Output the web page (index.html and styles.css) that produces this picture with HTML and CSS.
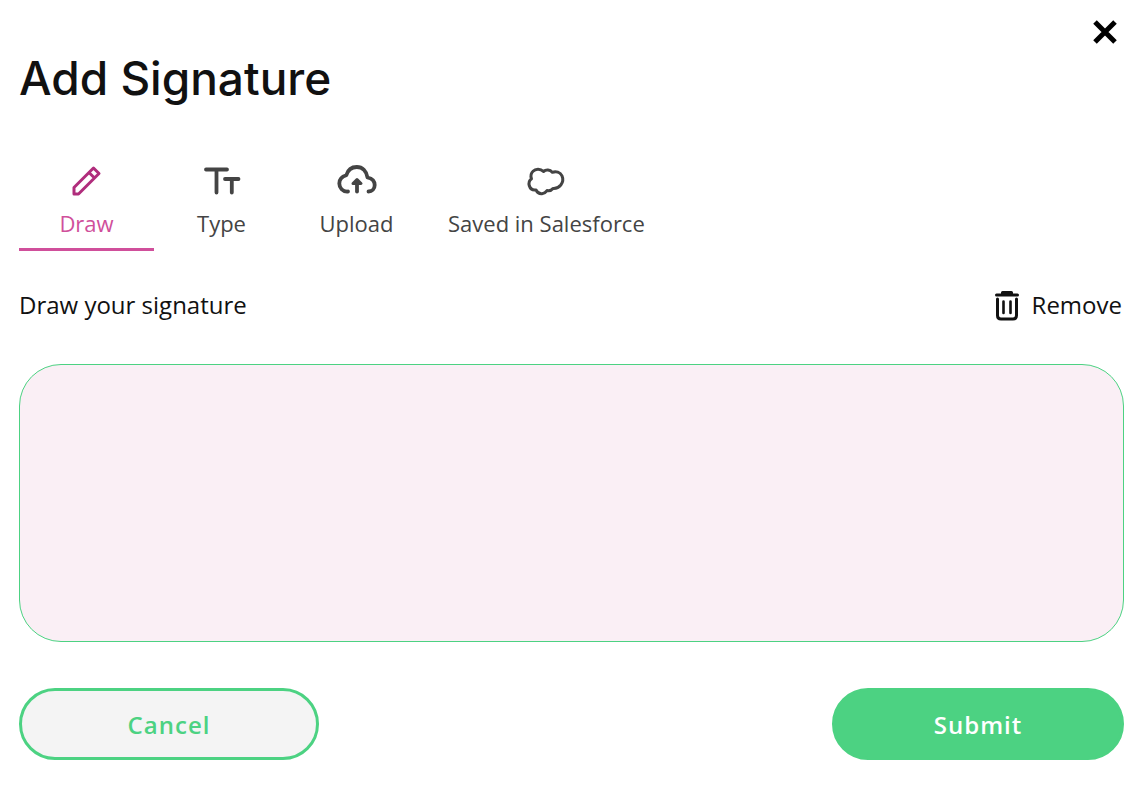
FILE: index.html
```html
<!DOCTYPE html>
<html lang="en">
<head>
    <meta charset="UTF-8">
    <meta name="viewport" content="width=device-width, initial-scale=1.0">
    <title>Add Signature</title>
    <link rel="stylesheet" href="styles.css">
</head>
<body>
    <main class="modal">
        <header class="modal-header">
            <button type="button" class="close-btn" aria-label="Close">
                <svg width="24" height="24" viewBox="0 0 24 24" fill="none" stroke="currentColor" stroke-width="5">
                    <path d="M2 2L22 22M22 2L2 22"/>
                </svg>
            </button>
            <h1>Add Signature</h1>
        </header>

        <div class="tabs" role="tablist">
            <button type="button" class="tab active" role="tab" aria-selected="true">
                <svg width="40" height="32" viewBox="0 0 40 32" fill="none" stroke="currentColor" stroke-width="3" stroke-linejoin="round">
                    <path d="M7 29V22.500L26.500 3L32 8.500L12.500 28L11.500 29ZM22 7.500L27.500 13"/>
                </svg>
                <span>Draw</span>
            </button>
            <button type="button" class="tab" role="tab" aria-selected="false">
                <svg width="40" height="32" viewBox="0 0 40 32" fill="none" stroke="currentColor" stroke-width="3.800" stroke-linecap="round" stroke-linejoin="round">
                    <path d="M4 4.500H25M14.500 4.500V27.500M23 14H36.500M29.800 14V27.500"/>
                </svg>
                <span>Type</span>
            </button>
            <button type="button" class="tab" role="tab" aria-selected="false">
                <svg width="40" height="32" viewBox="0 0 40 32" fill="none" stroke="currentColor" stroke-width="3.800" stroke-linecap="round" stroke-linejoin="round">
                    <path d="M11 26.500C5.500 27 2.300 22.500 2.300 18.500C2.300 14 5.200 11.500 9.300 10.300C10.800 5 14.500 2 19.800 2C25.500 2 29.500 6 30.500 12.500C35 13.500 37.700 16 37.700 20C37.700 24 35 26.500 31.500 26.500"/>
                    <path d="M20 26.500V16.500"/>
                    <path d="M16 18.500L20 14.500L24 18.500Z" fill="currentColor" stroke-width="3"/>
                </svg>
                <span>Upload</span>
            </button>
            <button type="button" class="tab" role="tab" aria-selected="false">
                <svg width="40" height="32" viewBox="0 0 40 32" fill="none" stroke="currentColor" stroke-width="3" stroke-linejoin="round">
                    <path d="M17.500 6.500C14.500 3.500 9.500 3.500 7 6.300C4.800 8.500 4.600 11.500 5.500 13.700C3 15.500 2.700 18.500 3.300 20.800C4.200 23.800 7 25.300 10 24.900C11.300 28 13.600 28.900 16 28.700C18.500 28.500 20 27 21 25.600C23.500 26 25.500 25.400 27 23.500C30.500 23.800 33 22.300 34.800 20C36.800 17.300 37.200 13.500 36 10.800C34.200 7.200 30 6 26.300 7.300C24 4.700 20 4.300 17.500 6.500Z"/>
                </svg>
                <span>Saved in Salesforce</span>
            </button>
        </div>

        <div class="toolbar">
            <span id="padLabel">Draw your signature</span>
            <button type="button" class="remove-btn">
                <svg width="26" height="32" viewBox="0 0 26 32" fill="none" stroke="currentColor" stroke-width="3" stroke-linecap="round" stroke-linejoin="round">
                    <path d="M2.500 6H23.500M8.500 3.500H17.500V5H8.500Z"/>
                    <path d="M3.500 10V26.500Q3.500 30 7 30H19Q22.500 30 22.500 26.500V10"/>
                    <path d="M9.500 12.500V24M16.500 12.500V24" stroke-width="2.600"/>
                </svg>
                <span>Remove</span>
            </button>
        </div>

        <canvas class="signature-pad" aria-labelledby="padLabel"></canvas>

        <footer class="actions">
            <button type="button" class="btn btn-cancel">Cancel</button>
            <button type="submit" class="btn btn-submit">Submit</button>
        </footer>
    </main>
</body>
</html>
```
FILE: styles.css
```css
:root {
    --green: #4cd282;
    --pink: #d04f9b;
    --pink-dark: #b02d7c;
    --pad-bg: #faeff5;
    --text: #111;
    --text-muted: #444;
}

* {
    box-sizing: border-box;
}

body {
    margin: 0;
    background: white;
    color: var(--text);
    font-family: "Open Sans", sans-serif;
    font-size: 24px;
}

button {
    padding: 0;
    border: none;
    background: none;
    color: inherit;
    font: inherit;
    cursor: pointer;
}

.modal {
    padding: 20px 19px;
}

.modal-header {
    display: flex;
    flex-direction: column;
}

.close-btn {
    display: flex;
    align-self: flex-end;
    margin-right: 7px;
    color: black;
}

h1 {
    margin: 4px 0 48px;
    font-family: Inter, sans-serif;
    font-size: 46px;
    font-weight: 500;
    line-height: 60px;
}

.tabs {
    display: flex;
}

.tab {
    display: flex;
    flex-direction: column;
    align-items: center;
    gap: 10px;
    min-width: 135px;
    padding: 9px 24px;
    border-bottom: 3px solid transparent;
    color: var(--text-muted);
    font-size: 22px;
    line-height: 32px;
}

.tab.active {
    border-bottom-color: var(--pink);
    color: var(--pink);
}

.tab.active svg {
    color: var(--pink-dark);
}

.toolbar {
    display: flex;
    align-items: center;
    justify-content: space-between;
    margin: 36px 0 41px;
    line-height: 36px;
}

.remove-btn {
    display: flex;
    align-items: center;
    gap: 12px;
    margin-right: 2px;
}

.signature-pad {
    display: block;
    width: 100%;
    height: 278px;
    border: 1px solid var(--green);
    border-radius: 42px;
    background: var(--pad-bg);
}

.actions {
    display: flex;
    justify-content: space-between;
    margin-top: 46px;
}

.btn {
    width: 300px;
    height: 72px;
    border: 3px solid var(--green);
    border-radius: 36px;
    font-weight: 600;
    letter-spacing: 1px;
}

.btn-cancel {
    background: #f4f4f4;
    color: var(--green);
}

.btn-submit {
    width: 292px;
    background: var(--green);
    color: white;
}
```
